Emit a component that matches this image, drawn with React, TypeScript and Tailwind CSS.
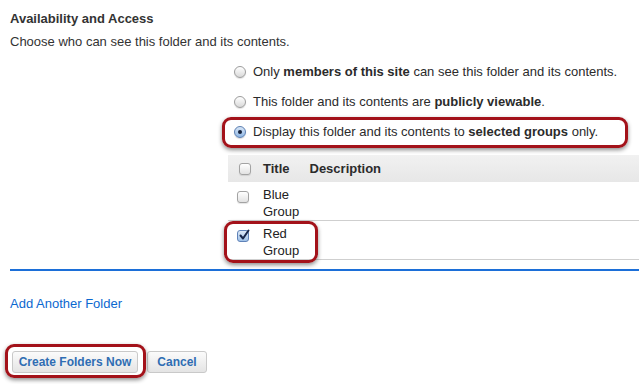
import React from 'react';

// Mac-style radio, drawn with plain CSS
function Radio({ checked }: { checked?: boolean }) {
    return checked ? (
        <span className="relative inline-flex items-center justify-center w-[12px] h-[12px] shrink-0 rounded-full border border-[#5b7fb2] bg-gradient-to-b from-[#d8e6f6] to-[#8fb6e3] shadow-[0_1px_1px_rgba(0,0,0,0.15)]">
            <span className="w-[4px] h-[4px] rounded-full bg-[#13213a]" />
        </span>
    ) : (
        <span className="inline-block w-[12px] h-[12px] shrink-0 rounded-full border border-[#9c9c9c] bg-gradient-to-b from-white to-[#d9d9d9] shadow-[0_1px_1px_rgba(0,0,0,0.12)]" />
    );
}

function Checkbox({ checked }: { checked?: boolean }) {
    return checked ? (
        <span className="relative inline-flex items-center justify-center w-[12px] h-[12px] shrink-0 rounded-[3px] border border-[#5f82b8] bg-gradient-to-b from-[#dde9f7] to-[#9fc1e8]">
            <svg width="12" height="12" viewBox="0 0 12 12" className="absolute -top-[2px] left-[0px]">
                <path d="M2.5 6.5 L5 9.5 L10.5 1.5" fill="none" stroke="#17264a" strokeWidth="2" strokeLinecap="round" strokeLinejoin="round" />
            </svg>
        </span>
    ) : (
        <span className="inline-block w-[12px] h-[12px] shrink-0 rounded-[3px] border border-[#a3a3a3] bg-gradient-to-b from-white to-[#e2e2e2] shadow-[0_1px_1px_rgba(0,0,0,0.1)]" />
    );
}

// red callout drawn over the screenshot
function Callout({ className }: { className: string }) {
    return (
        <span className={`absolute pointer-events-none border-[3px] border-[#a3121a] rounded-[9px] shadow-[0_2px_4px_rgba(0,0,0,0.45)] ${className}`} />
    );
}

export default function App() {
    const groups = [
        { id: 'blue', name: ['Blue', 'Group'], checked: false },
        { id: 'red', name: ['Red', 'Group'], checked: true },
    ];

    return (
        <div className="w-[639px] h-[384px] bg-white overflow-hidden font-['Liberation_Sans',Arial,sans-serif] text-[13px] text-[#2b2b2b]">
            {/* Heading */}
            <div className="pl-[10px] pt-[11px]">
                <h2 className="font-bold leading-4 text-[#333]">Availability and Access</h2>
                <p className="mt-[7px] leading-4 text-[#333]">Choose who can see this folder and its contents.</p>
            </div>

            {/* Options */}
            <div className="ml-[228px] mt-[7px]">
                <div className="flex items-center h-[30px] pl-[6px] gap-[7px]">
                    <Radio />
                    <span className="leading-4">Only <b>members of this site</b> can see this folder and its contents.</span>
                </div>
                <div className="flex items-center h-[30px] pl-[6px] gap-[7px]">
                    <Radio />
                    <span className="leading-4">This folder and its contents are <b>publicly viewable</b>.</span>
                </div>
                <div className="relative flex items-center h-[30px] pl-[6px] gap-[7px]">
                    <Radio checked />
                    <span className="leading-4">Display this folder and its contents to <b>selected groups</b> only.</span>
                    <Callout className="-left-[6px] top-0 -bottom-[1px] w-[406px]" />
                </div>

                {/* Groups table */}
                <div className="mt-[8px]">
                    <div className="flex items-center h-[27px] bg-gradient-to-b from-[#f1f1f1] to-[#e7e7e7] font-bold">
                        <span className="ml-[11px] flex"><Checkbox /></span>
                        <span className="ml-[12px]">Title</span>
                        <span className="ml-[20px]">Description</span>
                    </div>
                    {groups.map((g) => (
                        <div key={g.id} className="relative flex border-b border-[#cfcfcf] pt-[4px]">
                            <span className="ml-[9px] mt-[5px] flex h-[12px]"><Checkbox checked={g.checked} /></span>
                            <div className="ml-[14px] leading-[17px] text-[#222]">
                                <div>{g.name[0]}</div>
                                <div>{g.name[1]}</div>
                            </div>
                            {g.checked && <Callout className="-left-[4px] top-0 w-[94px] h-[42px]" />}
                        </div>
                    ))}
                </div>
            </div>

            <div className="ml-[10px] mt-[9px] h-[2px] bg-[#1c6fd8]" />

            <div className="pl-[10px] mt-[25px] leading-4">
                <a className="text-[#0b68d0] cursor-pointer">Add Another Folder</a>
            </div>

            {/* Actions */}
            <div className="flex pl-[12px] mt-[39px]">
                <div className="relative">
                    <button className="w-[126px] h-[22px] flex items-center justify-center rounded-[3px] border border-[#c9c9c9] bg-gradient-to-b from-[#fbfbfb] to-[#e4e4e4] text-[12px] font-bold text-[#2f6db3]">
                        Create Folders Now
                    </button>
                    <Callout className="-left-[7px] -top-[7px] -right-[8px] -bottom-[5px]" />
                </div>
                <button className="ml-[9px] w-[60px] h-[22px] flex items-center justify-center rounded-[3px] border border-[#c9c9c9] bg-gradient-to-b from-[#fbfbfb] to-[#e4e4e4] text-[12px] font-bold text-[#2f6db3]">
                    Cancel
                </button>
            </div>
        </div>
    );
}
